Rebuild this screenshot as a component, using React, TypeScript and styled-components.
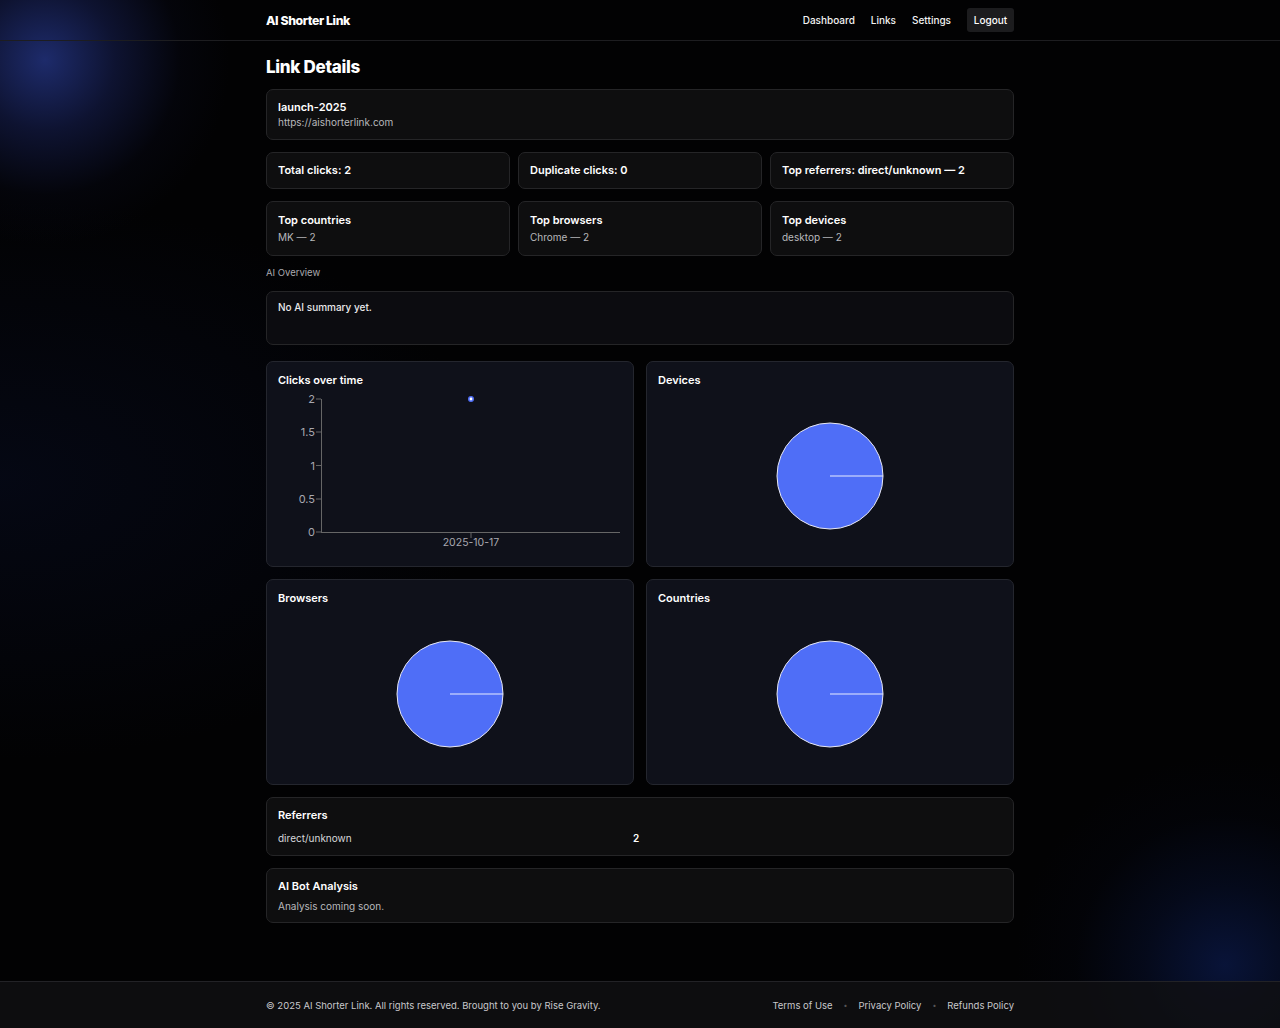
import React from "react";
import styled, { createGlobalStyle } from "styled-components";

const GlobalStyle = createGlobalStyle`
  html, body { margin: 0; padding: 0; }
  body {
    background-color: #020203;
    background-image:
      radial-gradient(circle at 45px 60px, rgba(34, 50, 125, 0.85) 0px, rgba(26, 36, 95, 0.5) 70px, rgba(12, 16, 45, 0.18) 135px, rgba(0,0,0,0) 185px),
      radial-gradient(circle at 1225px 965px, rgba(14, 34, 100, 0.55) 0px, rgba(10, 24, 70, 0.35) 80px, rgba(6, 12, 40, 0.12) 150px, rgba(0,0,0,0) 210px),
      radial-gradient(ellipse 700px 400px at 0px 480px, rgba(10, 18, 50, 0.35), rgba(0,0,0,0) 70%);
    background-attachment: fixed;
    color: #fff;
    font-family: Inter, "Open Sans", "Liberation Sans", sans-serif;
  }
  * { box-sizing: border-box; }
`;

const Page = styled.div`
  min-height: 100vh;
  display: flex;
  flex-direction: column;
`;

const Container = styled.div`
  width: 748px;
  margin: 0 auto;
`;

const HeaderBar = styled.header`
  border-bottom: 1px solid #1d1d20;
`;

const HeaderInner = styled(Container)`
  height: 40px;
  display: flex;
  align-items: center;
  justify-content: space-between;
`;

const Logo = styled.div`
  font-size: 12.3px;
  font-weight: 800;
  letter-spacing: -0.4px;
  color: #fff;
`;

const Nav = styled.nav`
  display: flex;
  align-items: center;
  gap: 16px;
`;

const NavLink = styled.a`
  font-size: 10px;
  font-weight: 500;
  color: #f2f2f2;
  text-decoration: none;
`;

const LogoutButton = styled.button`
  height: 24px;
  width: 47px;
  padding: 0;
  border: none;
  border-radius: 3px;
  background: #1c1c1e;
  color: #fff;
  font-family: inherit;
  font-size: 10px;
  font-weight: 500;
`;

const Main = styled(Container)`
  padding: 16px 0 58px;
  display: flex;
  flex-direction: column;
  gap: 12px;
`;

const Title = styled.h1`
  margin: 0;
  font-size: 17px;
  line-height: 20px;
  font-weight: 800;
  letter-spacing: -0.3px;
`;

const Card = styled.div<{ $pad?: string }>`
  background: #0e0e0f;
  border: 1px solid #252527;
  border-radius: 7px;
  padding: ${(p) => p.$pad || "10px 11px 11px"};
`;

const CardTitle = styled.div`
  font-size: 11px;
  line-height: 16px;
  font-weight: 600;
  color: #fff;
`;

const CardSub = styled.div<{ $gap?: number }>`
  font-size: 10px;
  line-height: 14px;
  color: #b8b8bc;
  margin-top: ${(p) => (p.$gap ?? 2)}px;
`;

const Grid3 = styled.div`
  display: grid;
  grid-template-columns: repeat(3, minmax(0, 1fr));
  gap: 8px;
`;

const SectionLabel = styled.div`
  font-size: 9.5px;
  color: #a9a9ae;
  margin: -2px 0 -1px;
  line-height: 14px;
`;

const Summary = styled(Card)`
  min-height: 54px;
  font-size: 10px;
  line-height: 14px;
  font-weight: 500;
  color: #e8e8ea;
  padding: 8px 11px;
  background: #0c0c10;
`;

const ChartGrid = styled.div`
  display: grid;
  grid-template-columns: minmax(0, 1fr) minmax(0, 1fr);
  gap: 12px;
  margin-top: 4px;
`;

const ChartCard = styled.div`
  background: #0f111a;
  border: 1px solid #24262e;
  border-radius: 7px;
  padding: 10px 11px 14px;
  display: flex;
  flex-direction: column;
  gap: 4px;
`;

const ChartArea = styled.div`
  height: 160px;
  display: flex;
  justify-content: center;
`;

const RefRow = styled.div`
  display: grid;
  grid-template-columns: 355px 1fr;
  font-size: 10px;
  line-height: 14px;
  color: #d8d8dc;
  margin-top: 8px;
`;

const RefCount = styled.span`
  font-weight: 600;
  color: #fff;
`;

const FooterBar = styled.footer`
  margin-top: auto;
  border-top: 1px solid #222226;
  background: rgba(16, 16, 18, 0.82);
`;

const FooterInner = styled(Container)`
  height: 46px;
  display: flex;
  align-items: center;
  justify-content: space-between;
  font-size: 9.5px;
  color: #c8c8cc;
`;

const FooterLinks = styled.div`
  display: flex;
  align-items: center;
  gap: 11px;
`;

const Dot = styled.span`
  color: #555;
  font-size: 7px;
`;

const BLUE = "#4f6ef7";

function LineChart() {
  const ticks = [
    { v: "2", y: 7 },
    { v: "1.5", y: 40 },
    { v: "1", y: 73.5 },
    { v: "0.5", y: 107 },
    { v: "0", y: 140 },
  ];
  return (
    <svg width="344" height="160" viewBox="0 0 344 160">
      {ticks.map((t) => (
        <g key={t.v}>
          <line x1="38" y1={t.y} x2="43" y2={t.y} stroke="#666" strokeWidth="1" />
          <text x="37" y={t.y + 4} textAnchor="end" fontSize="11" fill="#a8a8b0" fontFamily="Inter, sans-serif">
            {t.v}
          </text>
        </g>
      ))}
      <line x1="43.5" y1="7" x2="43.5" y2="140.5" stroke="#666" strokeWidth="1" />
      <line x1="43" y1="140.5" x2="342" y2="140.5" stroke="#666" strokeWidth="1" />
      <line x1="193" y1="140.5" x2="193" y2="146" stroke="#666" strokeWidth="1" />
      <text x="193" y="154" textAnchor="middle" fontSize="10.5" fill="#a8a8b0" fontFamily="Inter, sans-serif">
        2025-10-17
      </text>
      <circle cx="193" cy="7" r="2.2" fill="#fff" stroke={BLUE} strokeWidth="1.6" />
    </svg>
  );
}

function Pie() {
  const cx = 60;
  const cy = 84;
  const r = 53;
  return (
    <svg width="120" height="160" viewBox="0 0 120 160">
      <circle cx={cx} cy={cy} r={r} fill={BLUE} stroke="#e8e8f0" strokeWidth="1" />
      <line x1={cx} y1={cy} x2={cx + r} y2={cy} stroke="#e8ecff" strokeWidth="1" />
    </svg>
  );
}

export default function App() {
  return (
    <>
      <GlobalStyle />
      <Page>
        <HeaderBar>
          <HeaderInner>
            <Logo>AI Shorter Link</Logo>
            <Nav>
              <NavLink href="#">Dashboard</NavLink>
              <NavLink href="#">Links</NavLink>
              <NavLink href="#">Settings</NavLink>
              <LogoutButton>Logout</LogoutButton>
            </Nav>
          </HeaderInner>
        </HeaderBar>
        <Main>
          <Title>Link Details</Title>
          <Card $pad="9px 11px 10px">
            <CardTitle>launch-2025</CardTitle>
            <CardSub $gap={0}>https://aishorterlink.com</CardSub>
          </Card>
          <Grid3>
            <Card $pad="9px 11px 10px">
              <CardTitle>Total clicks: 2</CardTitle>
            </Card>
            <Card $pad="9px 11px 10px">
              <CardTitle>Duplicate clicks: 0</CardTitle>
            </Card>
            <Card $pad="9px 11px 10px">
              <CardTitle>Top referrers: direct/unknown — 2</CardTitle>
            </Card>
          </Grid3>
          <Grid3>
            <Card>
              <CardTitle>Top countries</CardTitle>
              <CardSub>MK — 2</CardSub>
            </Card>
            <Card>
              <CardTitle>Top browsers</CardTitle>
              <CardSub>Chrome — 2</CardSub>
            </Card>
            <Card>
              <CardTitle>Top devices</CardTitle>
              <CardSub>desktop — 2</CardSub>
            </Card>
          </Grid3>
          <SectionLabel>AI Overview</SectionLabel>
          <Summary>No AI summary yet.</Summary>
          <ChartGrid>
            <ChartCard>
              <CardTitle>Clicks over time</CardTitle>
              <ChartArea>
                <LineChart />
              </ChartArea>
            </ChartCard>
            <ChartCard>
              <CardTitle>Devices</CardTitle>
              <ChartArea>
                <Pie />
              </ChartArea>
            </ChartCard>
            <ChartCard>
              <CardTitle>Browsers</CardTitle>
              <ChartArea>
                <Pie />
              </ChartArea>
            </ChartCard>
            <ChartCard>
              <CardTitle>Countries</CardTitle>
              <ChartArea>
                <Pie />
              </ChartArea>
            </ChartCard>
          </ChartGrid>
          <Card $pad="9px 11px 10px">
            <CardTitle>Referrers</CardTitle>
            <RefRow>
              <span>direct/unknown</span>
              <RefCount>2</RefCount>
            </RefRow>
          </Card>
          <Card $pad="9px 11px 9px">
            <CardTitle>AI Bot Analysis</CardTitle>
            <CardSub $gap={5}>Analysis coming soon.</CardSub>
          </Card>
        </Main>
        <FooterBar>
          <FooterInner>
            <span>© 2025 AI Shorter Link. All rights reserved. Brought to you by Rise Gravity.</span>
            <FooterLinks>
              <span>Terms of Use</span>
              <Dot>•</Dot>
              <span>Privacy Policy</span>
              <Dot>•</Dot>
              <span>Refunds Policy</span>
            </FooterLinks>
          </FooterInner>
        </FooterBar>
      </Page>
    </>
  );
}
